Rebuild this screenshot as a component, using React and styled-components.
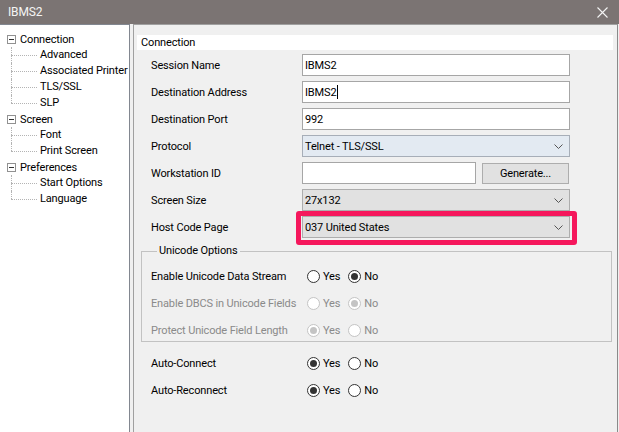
import React from 'react';
import styled, { createGlobalStyle, css } from 'styled-components';

const Global = createGlobalStyle`
  html, body { margin: 0; padding: 0; }
  body {
    font-family: Roboto, "Noto Sans", "Liberation Sans", sans-serif;
    font-size: 11px;
    letter-spacing: -0.15px;
    color: #000;
    background: #f0f0f0;
  }
  * { box-sizing: border-box; }
`;

const Window = styled.div`
  width: 619px;
  height: 432px;
  display: flex;
  flex-direction: column;
  background: #f0f0f0;
  overflow: hidden;
`;

const TitleBar = styled.div`
  height: 24px;
  flex: none;
  background: #7b7473;
  color: #f4f4f4;
  display: flex;
  align-items: center;
  justify-content: space-between;
  padding: 0 11px 0 8px;
  font-size: 12px;
`;

const CloseIcon = () => (
  <svg width="11" height="11" viewBox="0 0 11 11">
    <path d="M0.5 0.5 L10.5 10.5 M10.5 0.5 L0.5 10.5" stroke="#f4f4f4" strokeWidth="1.1" fill="none" />
  </svg>
);

const Body = styled.div`
  flex: 1;
  display: flex;
  min-height: 0;
  gap: 3px;
`;

const Tree = styled.div`
  width: 130px;
  flex: none;
  background: #fff;
  border-top: 1px solid #828790;
  border-right: 1px solid #828790;
  padding-top: 6px;
`;

const Group = styled.div``;

const NodeRow = styled.div`
  height: 16px;
  display: flex;
  align-items: center;
  padding-left: 7px;
  gap: 4px;
  white-space: nowrap;
`;

const Expander = styled.span`
  width: 9px;
  height: 9px;
  border: 1px solid #919191;
  display: flex;
  align-items: center;
  justify-content: center;
  &::before {
    content: '';
    width: 5px;
    height: 1px;
    background: #333;
  }
`;

const Leaf = styled.div`
  position: relative;
  height: 16px;
  line-height: 16px;
  padding-left: 40px;
  white-space: nowrap;
  &::before {
    content: '';
    position: absolute;
    left: 11px;
    top: 8px;
    width: 26px;
    border-top: 1px dotted #b4b4b4;
  }
  &::after {
    content: '';
    position: absolute;
    left: 11px;
    top: 0;
    height: ${p => (p.$last ? '8px' : '16px')};
    border-left: 1px dotted #b4b4b4;
  }
`;

const Pane = styled.div`
  flex: 1;
  border-left: 1px solid #a0a0a0;
  border-top: 1px solid #a0a0a0;
  border-right: 1px solid #8a8a8a;
  margin-right: 1px;
  padding: 10px 4px 0 3px;
`;

const Header = styled.div`
  height: 15px;
  line-height: 15px;
  background: #fff;
  padding-left: 4px;
  margin-bottom: 4px;
`;

const Form = styled.div`
  padding-left: 14px;
  display: flex;
  flex-direction: column;
  gap: 5px;
`;

const Row = styled.div`
  display: grid;
  grid-template-columns: 151px 268px;
  height: 22px;
  align-items: center;
`;

const Label = styled.span`
  color: ${p => (p.$disabled ? '#8a8a8a' : '#000')};
  white-space: nowrap;
`;

const TextBox = styled.div`
  height: 22px;
  background: #fff;
  border: 1px solid #a6a6a6;
  display: flex;
  align-items: center;
  padding-left: 2px;
  ${p => p.$width && css`width: ${p.$width}px;`}
`;

const Caret = styled.span`
  width: 1px;
  height: 14px;
  background: #000;
  margin-left: 1px;
`;

const Select = styled.div`
  height: 22px;
  border: 1px solid ${p => (p.$focus ? '#a7aeb8' : '#adadad')};
  background: ${p => (p.$focus ? '#e3eaf2' : '#e1e1e1')};
  display: flex;
  align-items: center;
  justify-content: space-between;
  padding: 0 6px 0 2px;
`;

const Chevron = () => (
  <svg width="9" height="5" viewBox="0 0 9 5">
    <path d="M0.5 0.5 L4.5 4.5 L8.5 0.5" stroke="#555" strokeWidth="1" fill="none" />
  </svg>
);

const Highlight = styled.div`
  position: relative;
  &::after {
    content: '';
    position: absolute;
    top: -5px;
    left: -6px;
    right: -7px;
    bottom: -7px;
    border: 5px solid #f5175c;
    border-radius: 3px;
    pointer-events: none;
  }
`;

const Split = styled.div`
  display: flex;
  gap: 6px;
  align-items: center;
`;

const Button = styled.div`
  width: 87px;
  height: 21px;
  background: #e1e1e1;
  border: 1px solid #adadad;
  display: flex;
  align-items: center;
  justify-content: center;
`;

const GroupBox = styled.fieldset`
  margin: 6px 1px 0 4px;
  padding: 9px 0 2px 9px;
  border: 1px solid #c2c2c2;
  min-width: 0;
`;

const Legend = styled.legend`
  margin-left: 6px;
  padding: 0 3px 0 2px;
  line-height: 14px;
  height: 14px;
`;

const RadioRows = styled.div`
  display: flex;
  flex-direction: column;
  gap: 9px;
`;

const RadioRow = styled.div`
  display: grid;
  grid-template-columns: ${p => p.$labelWidth}px auto;
  height: 18px;
  align-items: center;
`;

const Options = styled.div`
  display: flex;
  align-items: center;
  gap: 8px;
`;

const Option = styled.span`
  display: flex;
  align-items: center;
  gap: 3px;
  color: ${p => (p.$disabled ? '#8a8a8a' : '#000')};
`;

const Dot = styled.span`
  width: 13px;
  height: 13px;
  border-radius: 50%;
  border: 1px solid ${p => (p.$disabled ? '#c4c4c4' : '#333')};
  background: #fff;
  display: flex;
  align-items: center;
  justify-content: center;
  &::before {
    content: '';
    width: 7px;
    height: 7px;
    border-radius: 50%;
    background: ${p => (p.$disabled ? '#c4c4c4' : '#333')};
    display: ${p => (p.$checked ? 'block' : 'none')};
  }
`;

const Bottom = styled.div`
  padding: 12px 0 0 14px;
`;

const tree = [
  { name: 'Connection', children: ['Advanced', 'Associated Printer', 'TLS/SSL', 'SLP'] },
  { name: 'Screen', children: ['Font', 'Print Screen'] },
  { name: 'Preferences', children: ['Start Options', 'Language'] },
];

const Radio = ({ yes, disabled }) => (
  <Options>
    <Option $disabled={disabled}><Dot $checked={yes} $disabled={disabled} />Yes</Option>
    <Option $disabled={disabled}><Dot $checked={!yes} $disabled={disabled} />No</Option>
  </Options>
);

export default function App() {
  return (
    <>
      <Global />
      <Window>
        <TitleBar>
          <span>IBMS2</span>
          <CloseIcon />
        </TitleBar>
        <Body>
          <Tree>
            {tree.map(g => (
              <Group key={g.name}>
                <NodeRow><Expander />{g.name}</NodeRow>
                {g.children.map((c, i) => (
                  <Leaf key={c} $last={i === g.children.length - 1}>{c}</Leaf>
                ))}
              </Group>
            ))}
          </Tree>
          <Pane>
            <Header>Connection</Header>
            <Form>
              <Row>
                <Label>Session Name</Label>
                <TextBox>IBMS2</TextBox>
              </Row>
              <Row>
                <Label>Destination Address</Label>
                <TextBox>IBMS2<Caret /></TextBox>
              </Row>
              <Row>
                <Label>Destination Port</Label>
                <TextBox>992</TextBox>
              </Row>
              <Row>
                <Label>Protocol</Label>
                <Select $focus>Telnet - TLS/SSL<Chevron /></Select>
              </Row>
              <Row>
                <Label>Workstation ID</Label>
                <Split>
                  <TextBox $width={174} />
                  <Button>Generate...</Button>
                </Split>
              </Row>
              <Row>
                <Label>Screen Size</Label>
                <Select>27x132<Chevron /></Select>
              </Row>
              <Row>
                <Label>Host Code Page</Label>
                <Highlight>
                  <Select>037 United States<Chevron /></Select>
                </Highlight>
              </Row>
            </Form>
            <GroupBox>
              <Legend>Unicode Options</Legend>
              <RadioRows>
                <RadioRow $labelWidth={156}>
                  <Label>Enable Unicode Data Stream</Label>
                  <Radio yes={false} />
                </RadioRow>
                <RadioRow $labelWidth={156}>
                  <Label $disabled>Enable DBCS in Unicode Fields</Label>
                  <Radio yes={false} disabled />
                </RadioRow>
                <RadioRow $labelWidth={156}>
                  <Label $disabled>Protect Unicode Field Length</Label>
                  <Radio yes disabled />
                </RadioRow>
              </RadioRows>
            </GroupBox>
            <Bottom>
              <RadioRows>
                <RadioRow $labelWidth={156}>
                  <Label>Auto-Connect</Label>
                  <Radio yes />
                </RadioRow>
                <RadioRow $labelWidth={156}>
                  <Label>Auto-Reconnect</Label>
                  <Radio yes />
                </RadioRow>
              </RadioRows>
            </Bottom>
          </Pane>
        </Body>
      </Window>
    </>
  );
}
